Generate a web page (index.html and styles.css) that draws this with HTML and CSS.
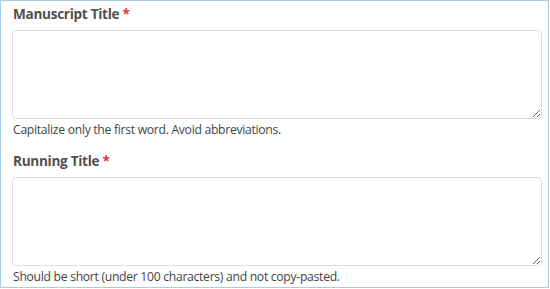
FILE: index.html
```html
<!DOCTYPE html>
<html>
<head>
<meta charset="utf-8">
<link rel="stylesheet" href="styles.css">
</head>
<body>
<div class="frame">
  <div class="field">
    <label class="label">Manuscript Title <span class="req">*</span></label>
    <textarea class="input"></textarea>
    <p class="help">Capitalize only the first word. Avoid abbreviations.</p>
  </div>
  <div class="field">
    <label class="label">Running Title <span class="req">*</span></label>
    <textarea class="input"></textarea>
    <p class="help">Should be short (under 100 characters) and not copy-pasted.</p>
  </div>
</div>
</body>
</html>
```
FILE: styles.css
```css
html, body {
  margin: 0;
  padding: 0;
  background: #fff;
}
.frame {
  width: 549px;
  height: 288px;
  box-sizing: border-box;
  border: 1px solid #a8cbea;
  padding: 3px 6px 0 11px;
  font-family: "Open Sans", "Noto Sans", sans-serif;
  display: flex;
  flex-direction: column;
  gap: 12px;
}
.field {
  display: flex;
  flex-direction: column;
}
.label {
  font-size: 13.6px;
  font-weight: 700;
  letter-spacing: -0.3px;
  line-height: 20px;
  color: #505050;
  margin: 0 0 6px 1px;
}
.req {
  color: #e0343f;
}
.input {
  display: block;
  width: 100%;
  height: 89px;
  box-sizing: border-box;
  border: 1px solid #dedede;
  border-radius: 4px;
  margin: 0;
  padding: 6px;
  background: #fff;
  outline: none;
}
.help {
  margin: 2px 0 0 1px;
  font-size: 12.2px;
  letter-spacing: -0.3px;
  line-height: 18px;
  color: #444;
}
```
